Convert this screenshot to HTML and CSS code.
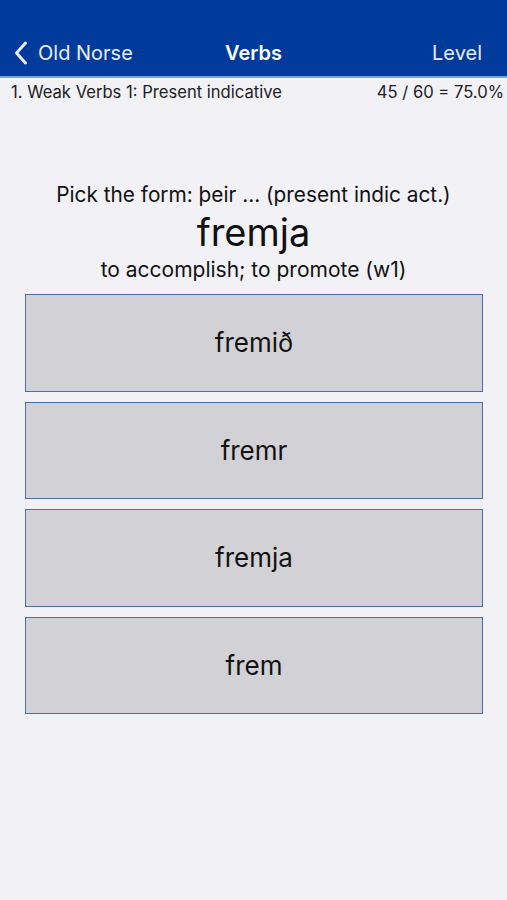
FILE: index.html
```html
<!DOCTYPE html>
<html lang="en">

<head>
    <meta charset="UTF-8">
    <meta name="viewport" content="width=device-width, initial-scale=1.0">
    <title>Verbs</title>
    <link rel="stylesheet" href="styles.css">
</head>

<body>
    <div class="navbar">
        <div class="nav-back">
            <svg class="chevron" width="14" height="24" viewBox="0 0 14 24">
                <path d="M11.5 2 L2.5 12 L11.5 22" fill="none" stroke="#e8eefa" stroke-width="3" stroke-linecap="round" stroke-linejoin="round"/>
            </svg>
            <span>Old Norse</span>
        </div>
        <div class="nav-title">Verbs</div>
        <div class="nav-right">Level</div>
    </div>
    <div class="subheader">
        <span>1. Weak Verbs 1: Present indicative</span>
        <span>45 / 60 = 75.0%</span>
    </div>

    <div class="question">
        <p class="prompt">Pick the form: þeir ... (present indic act.)</p>
        <p class="word">fremja</p>
        <p class="gloss">to accomplish; to promote (w1)</p>
    </div>

    <div class="answers">
        <button class="answer">fremið</button>
        <button class="answer">fremr</button>
        <button class="answer">fremja</button>
        <button class="answer">frem</button>
    </div>
</body>

</html>
```

FILE: styles.css
```css
body {
    margin: 0;
    background-color: #f1f1f6;
    font-family: Inter, "Liberation Sans", Arial, sans-serif;
    color: #111;
}

.navbar {
    height: 78px;
    background-color: #003b9b;
    border-bottom: 2px solid #7f9fd6;
    display: flex;
    align-items: flex-end;
    justify-content: space-between;
    padding: 0 25px 11px 14px;
    box-sizing: border-box;
    color: #e8eefa;
    font-size: 20px;
    position: relative;
}

.nav-back {
    display: flex;
    align-items: center;
    gap: 10px;
}

.nav-title {
    position: absolute;
    left: 0;
    right: 0;
    bottom: 11px;
    text-align: center;
    font-weight: 600;
    color: #fff;
    pointer-events: none;
}

.subheader {
    display: flex;
    justify-content: space-between;
    padding: 4px 3px 0 11px;
    font-size: 16.6px;
    color: #222;
}

.question {
    margin-top: 80px;
    text-align: center;
}

.question p {
    margin: 0;
}

.prompt {
    font-size: 20.8px;
    line-height: 26px;
}

.word {
    font-size: 38px;
    line-height: 46px;
    margin-top: 1px !important;
}

.gloss {
    font-size: 21px;
    line-height: 26px;
    margin-top: 2px !important;
}

.answers {
    display: flex;
    flex-direction: column;
    gap: 10px;
    margin: 11px 24px 0 25px;
}

.answer {
    height: 97.6px;
    background-color: #d1d1d6;
    border: 1.5px solid #4b6eb3;
    font-family: Inter, "Liberation Sans", Arial, sans-serif;
    font-size: 26px;
    color: #111;
    padding: 0;
}
```
